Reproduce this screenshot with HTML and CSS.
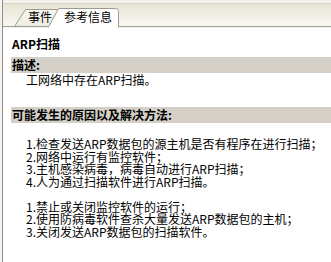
FILE: index.html
```html
<!DOCTYPE html>
<html>
<head>
<meta charset="utf-8">
<link rel="stylesheet" href="styles.css">
</head>
<body>
<div class="panel">
  <div class="tabbar">
    <svg class="tabshape" width="100%" height="28">
      <defs>
        <linearGradient id="bar" x1="0" y1="0" x2="0" y2="1">
          <stop offset="0" stop-color="#e8e5d4"/>
          <stop offset="1" stop-color="#f8f7f2"/>
        </linearGradient>
        <linearGradient id="tab" x1="0" y1="0" x2="0" y2="1">
          <stop offset="0" stop-color="#f7f6f0"/>
          <stop offset="1" stop-color="#eeece2"/>
        </linearGradient>
      </defs>
      <rect x="0" y="0" width="100%" height="3" fill="#f3f2ec"/>
      <rect x="0" y="4" width="100%" height="22" fill="url(#bar)"/>
      <rect x="0" y="3" width="100%" height="1" fill="#d9d5c3"/>
      <rect x="0" y="26" width="100%" height="1" fill="#a3a094"/>
      <rect x="0" y="27" width="100%" height="1" fill="#f4f3ee"/>
      <path d="M11.5 26.5 L22.5 9.5 L56 9.5 L56 26.5 Z" fill="url(#tab)" stroke="#9d9b8e" stroke-width="1"/>
      <path d="M45.5 27 L55.5 8.5 L112.5 8.5 Q115.5 8.5 115.5 11.5 L115.5 27 Z" fill="#ffffff" stroke="#9d9b8e" stroke-width="1"/>
      <rect x="46" y="26" width="69" height="2" fill="#ffffff"/>
    </svg>
    <span class="tab">事件</span>
    <span class="tab active">参考信息</span>
  </div>
  <div class="content">
    <div class="title">ARP扫描</div>
    <div class="band">描述:</div>
    <div class="desc">工网络中存在ARP扫描。</div>
    <div class="band band2">可能发生的原因以及解决方法:</div>
    <div class="list">
      <div class="line">1.检查发送ARP数据包的源主机是否有程序在进行扫描；</div>
      <div class="line">2.网络中运行有监控软件；</div>
      <div class="line">3.主机感染病毒，病毒自动进行ARP扫描；</div>
      <div class="line">4.人为通过扫描软件进行ARP扫描。</div>
    </div>
    <div class="list list2">
      <div class="line">1.禁止或关闭监控软件的运行；</div>
      <div class="line">2.使用防病毒软件查杀大量发送ARP数据包的主机；</div>
      <div class="line">3.关闭发送ARP数据包的扫描软件。</div>
    </div>
  </div>
</div>
</body>
</html>
```

FILE: styles.css
```css
html, body {
  margin: 0;
  padding: 0;
  background: #f4f3ee;
  height: 100%;
  overflow: hidden;
}
body {
  font-family: "Noto Sans CJK SC", "DejaVu Sans", sans-serif;
  font-size: 12px;
  color: #000;
}
.panel {
  margin-left: 2px;
  border-left: 1px solid #8e8e8e;
  background: #ffffff;
  height: 100%;
}
.tabbar {
  position: relative;
  height: 28px;
  display: flex;
  align-items: flex-start;
  padding-top: 10px;
  padding-left: 25px;
  box-sizing: border-box;
}
.tabshape {
  position: absolute;
  left: 0;
  top: 0;
}
.tab {
  position: relative;
  line-height: 14px;
  font-size: 12px;
}
.tab.active {
  margin-left: 12px;
}
.content {
  padding-left: 8px;
  padding-top: 8px;
}
.title {
  font-weight: bold;
  line-height: 16px;
  padding-left: 1px;
  margin-bottom: 5px;
}
.band {
  background: #d4d0c8;
  font-weight: bold;
  line-height: 16px;
  height: 16px;
  padding-left: 1px;
}
.desc {
  line-height: 14px;
  padding-left: 15px;
}
.band2 {
  margin-top: 20px;
}
.list {
  padding-left: 15px;
  margin-top: 15px;
}
.list2 {
  margin-top: 12.5px;
}
.line {
  line-height: 12.5px;
  white-space: nowrap;
}
```
